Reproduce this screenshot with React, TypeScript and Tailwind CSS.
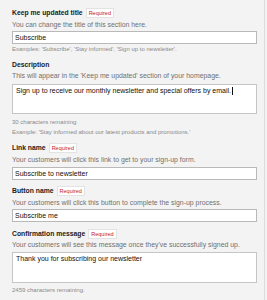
import React from "react";

const Req = () => (
  <span className="ml-[3px] inline-block border border-[#e3e3e3] bg-white px-[2px] text-[5.5px] leading-[8px] font-normal text-[#c4161c]">
    Required
  </span>
);

const Label = ({ text, req, mt }: { text: string; req?: boolean; mt: string }) => (
  <div className={`flex items-center h-[10px] ${mt}`}>
    <span className="text-[6.8px] font-bold text-[#222] leading-[10px]">{text}</span>
    {req && <Req />}
  </div>
);

const Desc = ({ text, mt }: { text: string; mt: string }) => (
  <div className={`text-[6.9px] leading-[10px] h-[10px] text-[#707070] ${mt}`}>{text}</div>
);

const Input = ({ value, mt }: { value: string; mt: string }) => (
  <div className={`h-[13px] w-[245px] border border-[#b9b9b9] bg-white pl-[2px] text-[7px] leading-[11px] text-[#111] ${mt}`}>
    {value}
  </div>
);

const Area = ({ value, cursor, mt, h }: { value: string; cursor?: boolean; mt: string; h: string }) => (
  <div className={`${h} w-[245px] border border-[#c6c6c6] bg-white pl-[3px] pt-[1px] text-[7px] leading-[10px] text-[#111] ${mt}`}>
    {value}
    {cursor && <span className="inline-block w-[1px] h-[8px] bg-[#111] align-middle ml-[1px]" />}
  </div>
);

const Small = ({ text, mt }: { text: string; mt: string }) => (
  <div className={`text-[6px] leading-[8px] h-[8px] text-[#8a8a8a] ${mt}`}>{text}</div>
);

export default function App() {
  return (
    <div className="w-[267px] h-[300px] bg-[#f3f3f3] overflow-hidden" style={{ fontFamily: '"Liberation Sans", Arial, sans-serif' }}>
      <div className="w-[265px] h-[300px] border-r border-[#dcdcdc] pl-[12px] pt-[8px] flex flex-col">
        <Label text="Keep me updated title" req mt="mt-0" />
        <Desc mt="mt-[2px]" text="You can change the title of this section here." />
        <Input mt="mt-[1px]" value="Subscribe" />
        <Small mt="mt-[1px]" text="Examples: 'Subscribe', 'Stay informed', 'Sign up to newsletter'." />
        <Label text="Description" mt="mt-[7px]" />
        <Desc mt="mt-[1px]" text="This will appear in the 'Keep me updated' section of your homepage." />
        <Area h="h-[30px]" mt="mt-[3px]" value="Sign up to receive our monthly newsletter and special offers by email." cursor />
        <Small mt="mt-[4px]" text="30 characters remaining" />
        <Small mt="mt-[2px]" text="Example: 'Stay informed about our latest products and promotions.'" />
        <Label text="Link name" req mt="mt-[7px]" />
        <Desc mt="mt-[2px]" text="Your customers will click this link to get to your sign-up form." />
        <Input mt="mt-[2px]" value="Subscribe to newsletter" />
        <Label text="Button name" req mt="mt-[6px]" />
        <Desc mt="mt-[2px]" text="Your customers will click this button to complete the sign-up process." />
        <Input mt="mt-[1px]" value="Subscribe me" />
        <Label text="Confirmation message" req mt="mt-[7px]" />
        <Desc mt="mt-[1px]" text="Your customers will see this message once they've successfully signed up." />
        <Area h="h-[31px]" mt="mt-[2px]" value="Thank you for subscribing our newsletter" />
        <Small mt="mt-[3px]" text="2459 characters remaining." />
      </div>
    </div>
  );
}
